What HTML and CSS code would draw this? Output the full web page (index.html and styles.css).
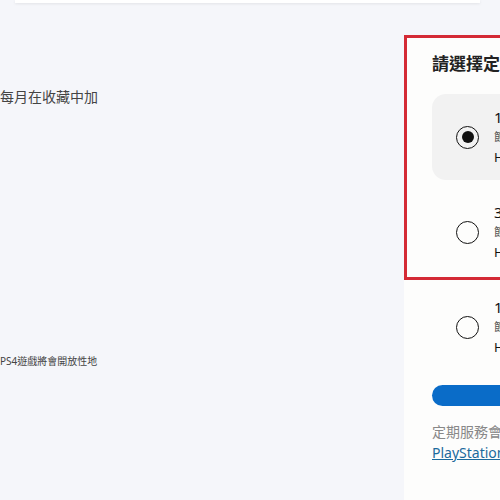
FILE: index.html
```html
<!DOCTYPE html>
<html lang="zh-Hant">
<head>
<meta charset="utf-8">
<link rel="stylesheet" href="styles.css">
</head>
<body>
<div class="topbar"></div>
<div class="page">
  <div class="left">
    <p class="lead">每月在收藏中加</p>
    <p class="note">PS4遊戲將會開放性地</p>
  </div>
  <div class="panel">
    <div class="highlight"></div>
    <h2 class="title">請選擇定期服務方案</h2>
    <div class="options">
      <div class="option selected">
        <span class="radio"></span>
        <div class="info">
          <div class="name">12個月訂閱</div>
          <div class="save">節省 HK$ 100</div>
          <div class="price">HK$ 468</div>
        </div>
      </div>
      <div class="option">
        <span class="radio"></span>
        <div class="info">
          <div class="name">3個月訂閱</div>
          <div class="save">節省 HK$ 20</div>
          <div class="price">HK$ 148</div>
        </div>
      </div>
      <div class="option">
        <span class="radio"></span>
        <div class="info">
          <div class="name">1個月訂閱</div>
          <div class="save">節省 HK$ 0</div>
          <div class="price">HK$ 58</div>
        </div>
      </div>
    </div>
    <button class="cta">繼續</button>
    <p class="terms">定期服務會自動續訂</p>
    <a class="link" href="#">PlayStation Store</a>
  </div>
</div>
</body>
</html>
```

FILE: styles.css
```css
html, body {
  margin: 0;
  padding: 0;
}
body {
  width: 500px;
  height: 500px;
  overflow: hidden;
  background: #f5f6fa;
  font-family: "Noto Sans", "Noto Sans CJK TC", sans-serif;
  color: #333;
}
.topbar {
  height: 3px;
  margin: 0 20px 0 15px;
  background: #fff;
  box-shadow: 0 1px 3px rgba(0, 0, 0, 0.08);
}
.page {
  display: grid;
  grid-template-columns: 404px 320px;
  width: 724px;
}
.left {
  padding-top: 84px;
}
.lead {
  margin: 0;
  font-size: 14px;
  line-height: 20px;
  color: #444;
}
.note {
  margin: 247px 0 0;
  font-size: 10px;
  line-height: 14px;
  color: #444;
}
.panel {
  position: relative;
  margin-top: 32px;
  min-height: 470px;
  background: #fdfdfc;
  padding: 17px 0 0 28px;
}
.highlight {
  position: absolute;
  left: 0;
  top: 0;
  width: 400px;
  height: 245px;
  border: 3px solid #d42a35;
  box-sizing: border-box;
  pointer-events: none;
}
.title {
  margin: 0;
  font-size: 17px;
  line-height: 24px;
  font-weight: 700;
  color: #222;
  white-space: nowrap;
}
.options {
  display: flex;
  flex-direction: column;
  gap: 9px;
  margin-top: 18px;
}
.option {
  display: flex;
  align-items: center;
  height: 86px;
  flex: 0 0 86px;
  padding-left: 24px;
  gap: 15px;
  border-radius: 14px;
}
.option.selected {
  background: #f2f2f2;
}
.radio {
  width: 23px;
  height: 23px;
  box-sizing: border-box;
  border: 1.5px solid #111;
  border-radius: 50%;
  flex: 0 0 auto;
  display: flex;
  align-items: center;
  justify-content: center;
}
.selected .radio::after {
  content: "";
  width: 12px;
  height: 12px;
  border-radius: 50%;
  background: #111;
}
.info {
  white-space: nowrap;
}
.name {
  font-size: 15px;
  line-height: 20px;
  color: #111;
}
.save {
  font-size: 11px;
  line-height: 20px;
  color: #555;
}
.price {
  font-size: 13px;
  line-height: 20px;
  color: #111;
}
.cta {
  display: block;
  margin: 15px 0 0;
  padding: 0;
  width: 260px;
  height: 21px;
  border: 0;
  border-radius: 11px;
  background: #0a6cc8;
  color: #fff;
  font: inherit;
  font-size: 13px;
  line-height: 21px;
}
.terms {
  margin: 16px 0 0;
  font-size: 14px;
  line-height: 20px;
  color: #888;
  white-space: nowrap;
}
.link {
  display: block;
  font-size: 14px;
  line-height: 22px;
  color: #1c6a9c;
  text-decoration: underline;
  white-space: nowrap;
}
```
